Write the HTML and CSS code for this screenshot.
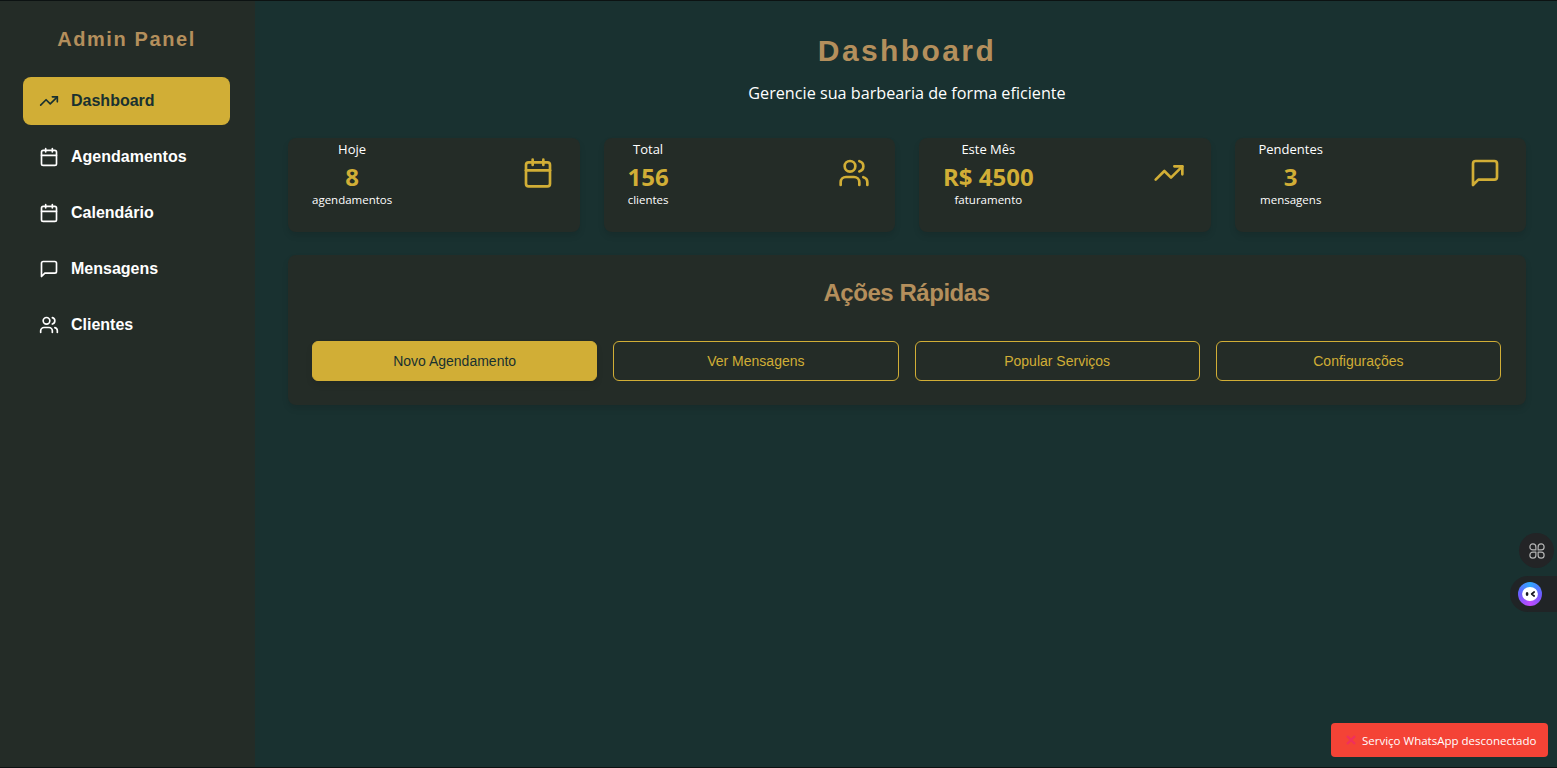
FILE: index.html
```html
<!DOCTYPE html>
<html lang="pt-BR">

<head>
    <meta charset="utf-8">
    <title>Admin Panel</title>
    <link rel="stylesheet" href="styles.css">
</head>

<body>
    <svg class="defs" width="0" height="0" aria-hidden="true">
        <symbol id="i-trend" viewBox="0 0 24 24"><path d="M22 7 13.5 15.5 8.5 10.5 2 17"/><path d="M16 7h6v6"/></symbol>
        <symbol id="i-cal" viewBox="0 0 24 24"><path d="M8 2v4"/><path d="M16 2v4"/><rect x="3" y="4" width="18" height="18" rx="2"/><path d="M3 10h18"/></symbol>
        <symbol id="i-msg" viewBox="0 0 24 24"><path d="M21 15a2 2 0 0 1-2 2H7l-4 4V5a2 2 0 0 1 2-2h14a2 2 0 0 1 2 2z"/></symbol>
        <symbol id="i-users" viewBox="0 0 24 24"><path d="M16 21v-2a4 4 0 0 0-4-4H6a4 4 0 0 0-4 4v2"/><circle cx="9" cy="7" r="4"/><path d="M22 21v-2a4 4 0 0 0-3-3.87"/><path d="M16 3.13a4 4 0 0 1 0 7.75"/></symbol>
    </svg>

    <div class="layout">
        <aside class="sidebar">
            <h2 class="brand">Admin Panel</h2>
            <nav class="nav">
                <a class="nav-item active"><svg class="nav-icon"><use href="#i-trend"/></svg>Dashboard</a>
                <a class="nav-item"><svg class="nav-icon"><use href="#i-cal"/></svg>Agendamentos</a>
                <a class="nav-item"><svg class="nav-icon"><use href="#i-cal"/></svg>Calendário</a>
                <a class="nav-item"><svg class="nav-icon"><use href="#i-msg"/></svg>Mensagens</a>
                <a class="nav-item"><svg class="nav-icon"><use href="#i-users"/></svg>Clientes</a>
            </nav>
        </aside>

        <main class="main">
            <header class="page-head">
                <h1>Dashboard</h1>
                <p>Gerencie sua barbearia de forma eficiente</p>
            </header>

            <section class="stats">
                <div class="stat">
                    <div class="stat-text">
                        <span class="stat-label">Hoje</span>
                        <strong class="stat-value">8</strong>
                        <span class="stat-sub">agendamentos</span>
                    </div>
                    <svg class="stat-icon"><use href="#i-cal"/></svg>
                </div>
                <div class="stat">
                    <div class="stat-text">
                        <span class="stat-label">Total</span>
                        <strong class="stat-value">156</strong>
                        <span class="stat-sub">clientes</span>
                    </div>
                    <svg class="stat-icon"><use href="#i-users"/></svg>
                </div>
                <div class="stat">
                    <div class="stat-text">
                        <span class="stat-label">Este Mês</span>
                        <strong class="stat-value">R$ 4500</strong>
                        <span class="stat-sub">faturamento</span>
                    </div>
                    <svg class="stat-icon"><use href="#i-trend"/></svg>
                </div>
                <div class="stat">
                    <div class="stat-text">
                        <span class="stat-label">Pendentes</span>
                        <strong class="stat-value">3</strong>
                        <span class="stat-sub">mensagens</span>
                    </div>
                    <svg class="stat-icon"><use href="#i-msg"/></svg>
                </div>
            </section>

            <section class="actions">
                <h2>Ações Rápidas</h2>
                <div class="action-row">
                    <button class="btn btn-fill">Novo Agendamento</button>
                    <button class="btn">Ver Mensagens</button>
                    <button class="btn">Popular Serviços</button>
                    <button class="btn">Configurações</button>
                </div>
            </section>
        </main>
    </div>

    <!-- widgets flutuantes -->
    <div class="float-cmd">
        <svg viewBox="0 0 24 24"><path d="M10.5 10.5h-4a4 4 0 1 1 4-4z"/><path d="M13.5 10.5h4a4 4 0 1 0-4-4z"/><path d="M10.5 13.5h-4a4 4 0 1 0 4 4z"/><path d="M13.5 13.5h4a4 4 0 1 1-4 4z"/></svg>
    </div>
    <div class="float-bot">
        <div class="bot-face">
            <svg viewBox="0 0 24 24"><ellipse cx="12" cy="12" rx="9.5" ry="8.5" fill="#fff"/><ellipse cx="8.5" cy="12" rx="1.6" ry="2.4" fill="#15151f"/><path d="M17 9.6 14 12l3 2.4" fill="none" stroke="#15151f" stroke-width="2"/></svg>
        </div>
    </div>

    <div class="toast">
        <svg class="toast-x" viewBox="0 0 10 10"><path d="M1 1l8 8M9 1l-8 8"/></svg>
        <span>Serviço WhatsApp desconectado</span>
    </div>
</body>

</html>
```

FILE: styles.css
```css
* {
    box-sizing: border-box;
}

html,
body {
    margin: 0;
    height: 100%;
}

body {
    background: #193130;
    border-top: 1px solid #0c1212;
    border-bottom: 1px solid #0c1212;
    overflow: hidden;
    font-family: "Liberation Sans", Arial, sans-serif;
    color: #fff;
}

.defs {
    position: absolute;
}

svg {
    fill: none;
    stroke: currentColor;
    stroke-linecap: round;
    stroke-linejoin: round;
    stroke-width: 2;
}

.layout {
    display: flex;
    height: 100%;
}

/* barra lateral */
.sidebar {
    flex: 0 0 255px;
    background: #242c27;
    padding: 24px 25px 0 23px;
}

.brand {
    margin: 0 0 24px;
    font-size: 20px;
    line-height: 28px;
    font-weight: 700;
    letter-spacing: 1.6px;
    text-align: center;
    color: #b48f5c;
}

.nav {
    display: flex;
    flex-direction: column;
    gap: 8px;
}

.nav-item {
    display: flex;
    align-items: center;
    gap: 12px;
    height: 48px;
    padding: 0 16px;
    border-radius: 8px;
    font-size: 16px;
    font-weight: 700;
    color: #fff;
}

.nav-item.active {
    background: #d1ae36;
    color: #193130;
}

.nav-icon {
    width: 20px;
    height: 20px;
    flex: none;
}

/* conteudo */
.main {
    flex: 1;
    padding: 32px 31px 0 33px;
}

.page-head {
    text-align: center;
    margin-bottom: 33px;
}

.page-head h1 {
    margin: 0 0 12px;
    font-size: 30px;
    line-height: 36px;
    letter-spacing: 2.4px;
    color: #b48f5c;
}

.page-head p {
    margin: 0;
    font-family: "Open Sans", sans-serif;
    font-size: 16.2px;
    line-height: 24px;
}

.stats {
    display: grid;
    grid-template-columns: repeat(4, 1fr);
    gap: 24px;
    margin-bottom: 23px;
}

.stat,
.actions {
    background: #242c27;
    border-radius: 8px;
    box-shadow: 0 4px 6px rgba(0, 0, 0, .1);
}

.stat {
    display: flex;
    justify-content: space-between;
    align-items: flex-start;
    height: 94px;
    padding: 0 25.5px 0 24px;
    font-family: "Open Sans", sans-serif;
}

.stat-text {
    display: flex;
    flex-direction: column;
    align-items: center;
}

.stat-label {
    font-size: 13px;
    line-height: 22px;
}

.stat-value {
    margin-top: 1px;
    font-size: 24px;
    line-height: 32px;
    color: #d1ae36;
}

.stat-sub {
    font-size: 11.5px;
    line-height: 14px;
}

.stat-icon {
    width: 32px;
    height: 32px;
    margin-top: 19px;
    color: #d1ae36;
}

.actions {
    padding: 24px 25px 24px 24px;
    height: 150px;
}

.actions h2 {
    margin: 0 0 34px;
    font-size: 24px;
    line-height: 28px;
    letter-spacing: -.45px;
    text-align: center;
    color: #b48f5c;
}

.action-row {
    display: grid;
    grid-template-columns: repeat(4, 1fr);
    gap: 16px;
}

.btn {
    height: 40px;
    background: transparent;
    border: 1px solid #d1ae36;
    border-radius: 6px;
    font-family: "Liberation Sans", Arial, sans-serif;
    font-size: 14px;
    color: #d1ae36;
}

.btn-fill {
    background: #d1ae36;
    color: #193130;
    box-shadow: 0 4px 6px rgba(0, 0, 0, .1);
}

/* widgets flutuantes */
.float-cmd {
    position: fixed;
    top: 533px;
    right: 3px;
    width: 35px;
    height: 35px;
    border-radius: 50%;
    background: #232426;
    color: #b5b5b5;
    display: flex;
    align-items: center;
    justify-content: center;
}

.float-cmd svg {
    width: 18px;
    height: 18px;
    stroke-width: 1.6;
}

.float-bot {
    position: fixed;
    top: 576px;
    right: 0;
    width: 47px;
    height: 36px;
    border-radius: 18px 0 0 18px;
    background: #202426;
    padding: 6px 0 0 8px;
}

.bot-face {
    width: 24px;
    height: 24px;
    border-radius: 50%;
    background: conic-gradient(#2fa8ff, #6a5cff, #c04bff, #6a5cff, #2fa8ff);
    padding: 2px;
}

.bot-face svg {
    display: block;
    width: 20px;
    height: 20px;
    stroke: none;
}

.toast {
    position: fixed;
    left: 1331px;
    top: 723px;
    width: 217px;
    height: 34px;
    display: flex;
    align-items: center;
    gap: 6px;
    padding-left: 15px;
    border-radius: 4px;
    background: #f44336;
    font-family: "Open Sans", sans-serif;
    font-size: 11.5px;
    white-space: nowrap;
}

.toast-x {
    width: 10px;
    height: 10px;
    flex: none;
    color: #f0305c;
    stroke-width: 2.4;
    stroke-linecap: butt;
}
```
